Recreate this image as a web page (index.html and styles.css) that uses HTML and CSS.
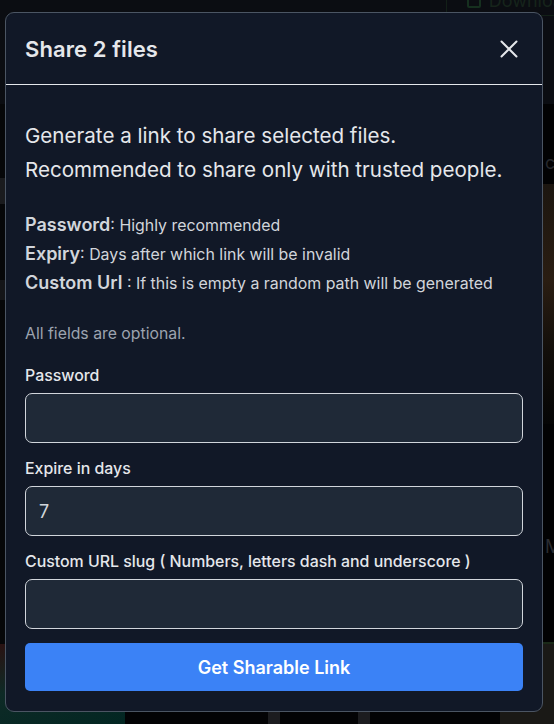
FILE: index.html
```html
<!DOCTYPE html>
<html lang="en">
<head>
<meta charset="utf-8">
<title>Share 2 files</title>
<link rel="stylesheet" href="styles.css">
</head>
<body>
<div class="app">
  <div class="app-top">
    <div class="download-btn"><span class="dl-icon"></span>Download</div>
  </div>
  <div class="app-strip left-strip"></div>
  <div class="app-strip left-strip2"></div>
  <div class="app-side">
    <span class="side-text t1">cl</span>
    <div class="side-photo"></div>
    <span class="side-text t2">MI</span>
    <div class="side-green"></div>
  </div>
  <div class="app-bottom">
    <div class="b-green"></div>
    <div class="b-black"></div>
    <div class="b-gray"></div>
    <div class="b-black2"></div>
    <div class="b-gray"></div>
    <div class="b-black3"></div>
    <div class="b-dark"></div>
  </div>
</div>

<div class="overlay">
  <div class="modal">
    <div class="modal-header">
      <h2 class="modal-title">Share 2 files</h2>
      <button class="close-btn" aria-label="Close">
        <svg width="18" height="18" viewBox="0 0 18 18"><path d="M1.5 1.5 L16.5 16.5 M16.5 1.5 L1.5 16.5" stroke="#e5e7eb" stroke-width="2" stroke-linecap="round" fill="none"/></svg>
      </button>
    </div>
    <div class="modal-body">
      <p class="intro">Generate a link to share selected files.<br>Recommended to share only with trusted people.</p>
      <ul class="legend">
        <li><b>Password</b>: Highly recommended</li>
        <li><b>Expiry</b>: Days after which link will be invalid</li>
        <li><b>Custom Url</b> : If this is empty a random path will be generated</li>
      </ul>
      <p class="optional">All fields are optional.</p>
      <div class="field">
        <label class="label">Password</label>
        <div class="input"></div>
      </div>
      <div class="field">
        <label class="label">Expire in days</label>
        <div class="input">7</div>
      </div>
      <div class="field">
        <label class="label">Custom URL slug ( Numbers, letters dash and underscore )</label>
        <div class="input"></div>
      </div>
      <button class="primary-btn">Get Sharable Link</button>
    </div>
  </div>
</div>
</body>
</html>
```
FILE: styles.css
```css
* { box-sizing: border-box; }
html, body { margin: 0; padding: 0; }
body {
  width: 554px;
  height: 724px;
  overflow: hidden;
  background: #060709;
  font-family: Inter, "Noto Sans", sans-serif;
  position: relative;
}

/* underlying app (dimmed) */
.app { position: absolute; inset: 0; overflow: hidden; }
.app-top {
  height: 104px;
  background: #0b0d12;
  display: flex;
  justify-content: flex-end;
  align-items: flex-start;
}
.download-btn {
  margin-top: -14px;
  margin-right: -30px;
  height: 30px;
  padding: 0 10px 0 20px;
  border-left: 1px solid #132018;
  border-bottom: 1px solid #132018;
  display: flex;
  align-items: center;
  gap: 8px;
  color: #16241b;
  font-size: 18px;
}
.dl-icon { width: 14px; height: 14px; border: 2px solid #16301f; border-radius: 2px; }
.app-strip { position: absolute; left: 0; width: 6px; background: #1a1b1e; }
.left-strip { top: 178px; height: 26px; }
.left-strip2 { top: 280px; height: 20px; background: #141518; }
.app-side {
  position: absolute;
  left: 542px; right: 0; top: 104px; bottom: 24px;
  background: #020203;
  overflow: hidden;
}
.side-text { position: absolute; left: 3px; color: #26282d; font-size: 18px; }
.t1 { top: 48px; }
.t2 { top: 432px; color: #2a2c31; }
.side-photo { position: absolute; left: 0; right: 0; top: 80px; height: 240px;
  background: linear-gradient(180deg, #1c1610 0%, #2a1d12 40%, #120e0a 70%, #050505 100%); }
.side-green { position: absolute; left: 0; right: 0; top: 538px; bottom: 0;
  background: linear-gradient(180deg, #1a2a18, #0f1a10); }
.app-bottom {
  position: absolute; left: 0; right: 0; bottom: 0; height: 80px;
  display: flex;
}
.b-green { width: 125px; background: linear-gradient(160deg, #2a1212 0%, #0e2a26 40%, #022622 100%); }
.b-black { width: 143px; background: #030305; }
.b-gray { width: 12px; background: #1c1c1f; }
.b-black2 { width: 78px; background: #030305; }
.b-black3 { width: 130px; background: #030305; }
.b-dark { flex: 1; background: #1a1916; }

/* modal */
.overlay {
  position: absolute;
  left: 5px;
  top: 12px;
}
.modal {
  width: 538px;
  height: 700px;
  background: #111827;
  border: 1px solid #4b5563;
  border-radius: 9px;
  overflow: hidden;
  display: flex;
  flex-direction: column;
}
.modal-header {
  height: 72px;
  flex: none;
  display: flex;
  align-items: center;
  justify-content: space-between;
  padding: 0 24px 0 19px;
  border-bottom: 1px solid #e5e7eb;
}
.modal-title {
  margin: 0;
  font-size: 22px;
  font-weight: 600;
  color: #e5e7eb;
  letter-spacing: 0.1px;
}
.close-btn {
  background: none;
  border: 0;
  padding: 0;
  width: 18px;
  height: 18px;
  display: flex;
  cursor: pointer;
}
.modal-body {
  padding: 34px 19px 20px;
  display: flex;
  flex-direction: column;
}
.intro {
  margin: 0;
  font-size: 20.6px;
  line-height: 34px;
  color: #e5e7eb;
}
.legend {
  list-style: none;
  margin: 24px 0 0;
  padding: 0;
  color: #d1d5db;
  font-size: 15.9px;
  line-height: 29px;
}
.legend li { height: 29px; }
.legend b {
  font-size: 18px;
  line-height: 1;
  font-weight: 600;
  color: #d1d5db;
}
.optional {
  margin: 25px 0 0;
  font-size: 15.8px;
  line-height: 22px;
  color: #9ca3af;
}
.field { margin-top: 20px; display: flex; flex-direction: column; }
.field + .field { margin-top: 15px; }
.label {
  font-size: 15.9px;
  line-height: 22px;
  font-weight: 500;
  color: #e5e7eb;
  margin-bottom: 6px;
}
.input {
  height: 50px;
  background: #1f2937;
  border: 1px solid #d1d5db;
  border-radius: 7px;
  padding: 0 13px;
  display: flex;
  align-items: center;
  font-size: 18px;
  color: #d1d5db;
}
.primary-btn {
  margin-top: 14px;
  height: 48px;
  border: 0;
  border-radius: 5px;
  background: #3b82f6;
  color: #ffffff;
  font-family: inherit;
  font-size: 18px;
  font-weight: 600;
}
```
